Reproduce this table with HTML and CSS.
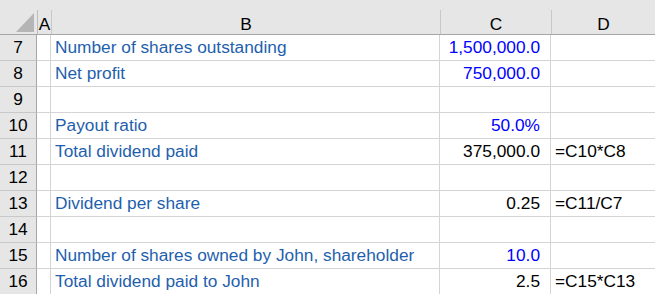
FILE: index.html
```html
<!DOCTYPE html>
<html>
<head>
<meta charset="utf-8">
<link rel="stylesheet" href="styles.css">
</head>
<body>
<div class="sheet">
  <div class="hdr">
    <div class="corner"><svg class="tri" width="18" height="19" viewBox="0 0 18 19"><polygon points="18,0 18,19 0,19" fill="#b5b5b5"/></svg></div>
    <div class="ch ca">A</div>
    <div class="ch cb">B</div>
    <div class="ch cc">C</div>
    <div class="ch cd">D</div>
  </div>
  <div class="row"><div class="rh">7</div><div class="c ca"></div><div class="c cb lbl">Number of shares outstanding</div><div class="c cc num inp">1,500,000.0</div><div class="c cd"></div></div>
  <div class="row"><div class="rh">8</div><div class="c ca"></div><div class="c cb lbl">Net profit</div><div class="c cc num inp">750,000.0</div><div class="c cd"></div></div>
  <div class="row"><div class="rh">9</div><div class="c ca"></div><div class="c cb"></div><div class="c cc"></div><div class="c cd"></div></div>
  <div class="row"><div class="rh">10</div><div class="c ca"></div><div class="c cb lbl">Payout ratio</div><div class="c cc num inp">50.0%</div><div class="c cd"></div></div>
  <div class="row"><div class="rh">11</div><div class="c ca"></div><div class="c cb lbl">Total dividend paid</div><div class="c cc num">375,000.0</div><div class="c cd">=C10*C8</div></div>
  <div class="row"><div class="rh">12</div><div class="c ca"></div><div class="c cb"></div><div class="c cc"></div><div class="c cd"></div></div>
  <div class="row"><div class="rh">13</div><div class="c ca"></div><div class="c cb lbl">Dividend per share</div><div class="c cc num">0.25</div><div class="c cd">=C11/C7</div></div>
  <div class="row"><div class="rh">14</div><div class="c ca"></div><div class="c cb"></div><div class="c cc"></div><div class="c cd"></div></div>
  <div class="row"><div class="rh">15</div><div class="c ca"></div><div class="c cb lbl">Number of shares owned by John, shareholder</div><div class="c cc num inp">10.0</div><div class="c cd"></div></div>
  <div class="row"><div class="rh">16</div><div class="c ca"></div><div class="c cb lbl">Total dividend paid to John</div><div class="c cc num">2.5</div><div class="c cd">=C15*C13</div></div>
</div>
</body>
</html>
```
FILE: styles.css
```css
* { box-sizing: border-box; }
html, body { margin: 0; padding: 0; background: #fff; }
body { font-family: "Liberation Sans", Arial, sans-serif; font-size: 17.3px; color: #000; }
.sheet { width: 655px; height: 294px; overflow: hidden; }
.hdr {
  display: flex; align-items: flex-end; height: 35px;
  background: #e6e6e6; border-bottom: 1px solid #a6a6a6;
}
.corner {
  width: 37px; height: 34px; display: flex; align-items: flex-end; justify-content: flex-end;
  padding: 0 3px 2px 0;
}
.ch {
  height: 24px; border-left: 1px solid #c8c8c8; text-align: center;
  padding-top: 3px; line-height: 22px; color: #000;
}
.ch.ca { width: 14px; border-left-color: #bdbdbd; }
.ch.cb { width: 389px; }
.ch.cc { width: 111px; }
.ch.cd { width: 104px; }
.row { display: flex; height: 26px; }
.rh {
  width: 37px; background: #e6e6e6; border-right: 1px solid #a6a6a6; border-bottom: 1px solid #c8c8c8;
  text-align: center; line-height: 25px;
}
.c {
  border-right: 1px solid #d4d4d4; border-bottom: 1px solid #d4d4d4;
  line-height: 25px; white-space: nowrap; overflow: hidden; padding: 0 4px;
}
.row .ca { width: 14px; }
.row .cb { width: 389px; }
.row .cc { width: 111px; }
.row .cd { width: 104px; border-right: none; }
.lbl { color: #1f5fad; }
.num { text-align: right; padding-right: 10px; }
.inp { color: #0000ff; }
```
